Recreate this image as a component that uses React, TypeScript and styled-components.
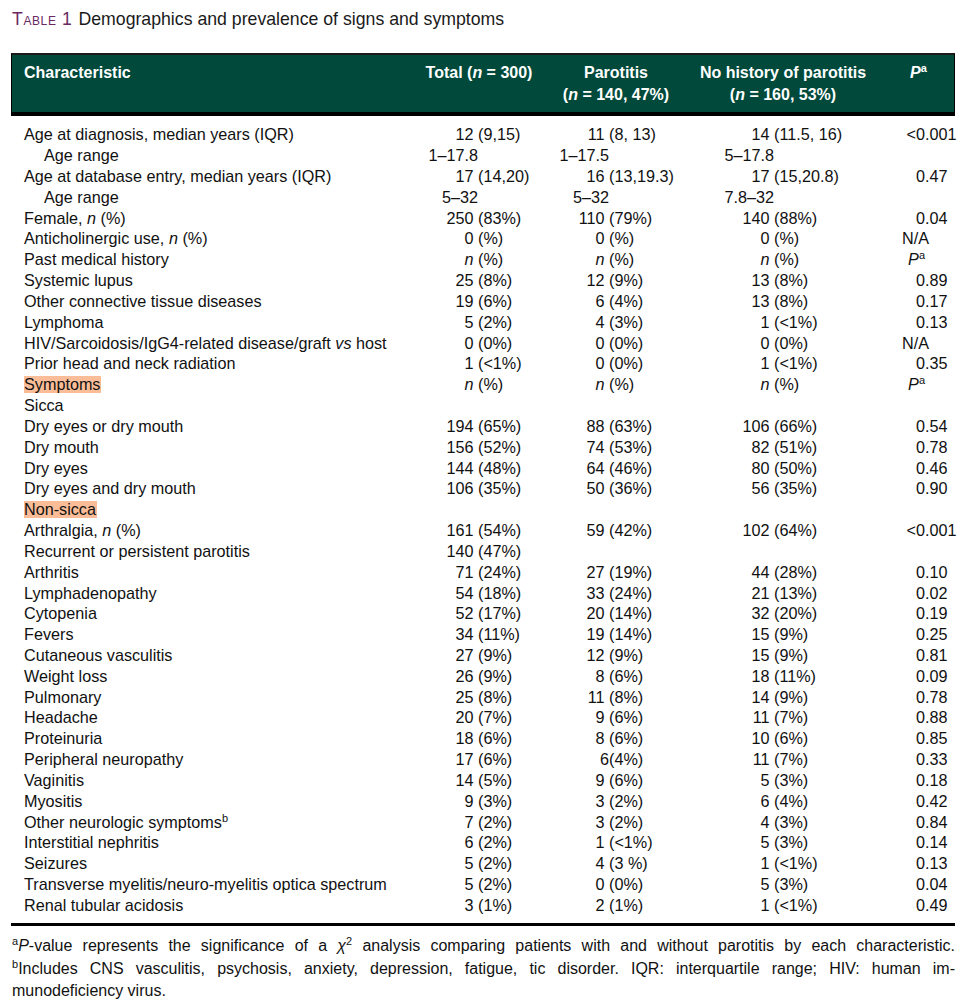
import React from "react";
import styled, { createGlobalStyle } from "styled-components";

const GlobalStyle = createGlobalStyle`
  html, body { margin: 0; padding: 0; background: #fff; }
  body { font-family: "Liberation Sans", Arial, Helvetica, sans-serif; color: #111; }
`;

const Page = styled.div`
  width: 966px;
  padding: 8px 11px 0 11px;
  box-sizing: border-box;
`;

const Title = styled.h1`
  margin: 0 0 23px 1px;
  font-size: 17.7px;
  font-weight: normal;
  line-height: 22px;
  color: #1a1a1a;
  white-space: nowrap;
`;

const TitleLabel = styled.span`
  color: #6b2a5f;
  font-variant: small-caps;
  letter-spacing: 0.6px;
  margin-right: 6px;
`;

const Head = styled.div`
  display: grid;
  grid-template-columns: 1fr 140px 134px 200px 71px;
  align-items: start;
  background: #00493b;
  color: #fff;
  font-weight: bold;
  font-size: 16px;
  line-height: 22px;
  border-top: 2px solid #1b1b1b;
  border-bottom: 4px solid #000;
  border-left: 1px solid #000;
  border-right: 1px solid #000;
  padding: 7px 0 6px;
`;

const HeadCell = styled.div<{ $align?: "left" | "center" }>`
  text-align: ${(p) => p.$align ?? "center"};
  padding-left: ${(p) => (p.$align === "left" ? "12px" : "0")};
  white-space: nowrap;
`;

const Body = styled.div`
  padding: 8.3px 0 7.3px;
  border-bottom: 3px solid #000;
`;

const Row = styled.div`
  display: grid;
  grid-template-columns: 389px 145px 145px 190px 75px;
  font-size: 16.2px;
  line-height: 20.84px;
  height: 20.84px;
  white-space: nowrap;
`;

const Label = styled.div<{ $indent?: boolean }>`
  padding-left: ${(p) => (p.$indent ? "33px" : "13px")};
`;

const Highlight = styled.span`
  display: inline-block;
  background: #fbbd98;
  line-height: 17px;
  padding: 0 1px 0 0;
`;

const Num = styled.div<{ $before: number }>`
  display: grid;
  grid-template-columns: ${(p) => p.$before}px auto;
  white-space: pre;
`;

const Pre = styled.span`
  text-align: right;
  white-space: pre;
`;

const Post = styled.span`
  white-space: pre;
`;

const I = styled.i`
  font-style: italic;
`;

const Sup = styled.sup`
  font-size: 11px;
  line-height: 0;
  vertical-align: 6px;
`;

const Notes = styled.div`
  margin: 9px 0 0 1px;
  font-family: "Liberation Sans Narrow", "Arial Narrow", "Liberation Sans", sans-serif;
  font-stretch: condensed;
  font-size: 16px;
  line-height: 22.5px;
  color: #111;
`;

const NoteLine = styled.div<{ $justify?: boolean }>`
  text-align: justify;
  text-align-last: ${(p) => (p.$justify ? "justify" : "left")};
  white-space: nowrap;
`;

const NoteSup = styled.sup`
  font-size: 11px;
  line-height: 0;
  vertical-align: 6px;
`;

type Vals = [string, string, string, string];
type RowData = { label: React.ReactNode; indent?: boolean; hl?: boolean; v?: Vals; range?: boolean };

const ANCH = [78, 64, 84, 45];

function Count({ v, col, range }: { v: string; col: number; range?: boolean }) {
  if (!v) return <div />;
  if (range) {
    return (
      <Num $before={ANCH[col]}>
        <Pre>{v}</Pre>
        <Post />
      </Num>
    );
  }
  if (v === "n (%)") {
    return (
      <Num $before={ANCH[col]}>
        <Pre>
          <I>n</I>{" "}
        </Pre>
        <Post>(%)</Post>
      </Num>
    );
  }
  const idx = v.indexOf("(");
  return (
    <Num $before={ANCH[col]}>
      <Pre>{v.slice(0, idx)}</Pre>
      <Post>{v.slice(idx)}</Post>
    </Num>
  );
}

function PVal({ v }: { v: string }) {
  if (!v) return <div />;
  if (v === "P") {
    return (
      <Num $before={ANCH[3]}>
        <Pre>
          <I>P</I>
          <Sup>a</Sup>
        </Pre>
        <Post />
      </Num>
    );
  }
  if (v === "N/A") {
    return (
      <Num $before={ANCH[3] + 4}>
        <Pre>N/A</Pre>
        <Post />
      </Num>
    );
  }
  const idx = v.indexOf(".");
  return (
    <Num $before={ANCH[3]}>
      <Pre>{v.slice(0, idx)}</Pre>
      <Post>{v.slice(idx)}</Post>
    </Num>
  );
}

const rows: RowData[] = [
  { label: "Age at diagnosis, median years (IQR)", v: ["12 (9,15)", "11 (8, 13)", "14 (11.5, 16)", "<0.001"] },
  { label: "Age range", indent: true, range: true, v: ["1–17.8", "1–17.5", "5–17.8", ""] },
  { label: "Age at database entry, median years (IQR)", v: ["17 (14,20)", "16 (13,19.3)", "17 (15,20.8)", "0.47"] },
  { label: "Age range", indent: true, range: true, v: ["5–32", "5–32", "7.8–32", ""] },
  { label: <>Female, <I>n</I> (%)</>, v: ["250 (83%)", "110 (79%)", "140 (88%)", "0.04"] },
  { label: <>Anticholinergic use, <I>n</I> (%)</>, v: ["0 (%)", "0 (%)", "0 (%)", "N/A"] },
  { label: "Past medical history", v: ["n (%)", "n (%)", "n (%)", "P"] },
  { label: "Systemic lupus", v: ["25 (8%)", "12 (9%)", "13 (8%)", "0.89"] },
  { label: "Other connective tissue diseases", v: ["19 (6%)", "6 (4%)", "13 (8%)", "0.17"] },
  { label: "Lymphoma", v: ["5 (2%)", "4 (3%)", "1 (<1%)", "0.13"] },
  { label: <>HIV/Sarcoidosis/IgG4-related disease/graft <I>vs</I> host</>, v: ["0 (0%)", "0 (0%)", "0 (0%)", "N/A"] },
  { label: "Prior head and neck radiation", v: ["1 (<1%)", "0 (0%)", "1 (<1%)", "0.35"] },
  { label: "Symptoms", hl: true, v: ["n (%)", "n (%)", "n (%)", "P"] },
  { label: "Sicca" },
  { label: "Dry eyes or dry mouth", v: ["194 (65%)", "88 (63%)", "106 (66%)", "0.54"] },
  { label: "Dry mouth", v: ["156 (52%)", "74 (53%)", "82 (51%)", "0.78"] },
  { label: "Dry eyes", v: ["144 (48%)", "64 (46%)", "80 (50%)", "0.46"] },
  { label: "Dry eyes and dry mouth", v: ["106 (35%)", "50 (36%)", "56 (35%)", "0.90"] },
  { label: "Non-sicca", hl: true },
  { label: <>Arthralgia, <I>n</I> (%)</>, v: ["161 (54%)", "59 (42%)", "102 (64%)", "<0.001"] },
  { label: "Recurrent or persistent parotitis", v: ["140 (47%)", "", "", ""] },
  { label: "Arthritis", v: ["71 (24%)", "27 (19%)", "44 (28%)", "0.10"] },
  { label: "Lymphadenopathy", v: ["54 (18%)", "33 (24%)", "21 (13%)", "0.02"] },
  { label: "Cytopenia", v: ["52 (17%)", "20 (14%)", "32 (20%)", "0.19"] },
  { label: "Fevers", v: ["34 (11%)", "19 (14%)", "15 (9%)", "0.25"] },
  { label: "Cutaneous vasculitis", v: ["27 (9%)", "12 (9%)", "15 (9%)", "0.81"] },
  { label: "Weight loss", v: ["26 (9%)", "8 (6%)", "18 (11%)", "0.09"] },
  { label: "Pulmonary", v: ["25 (8%)", "11 (8%)", "14 (9%)", "0.78"] },
  { label: "Headache", v: ["20 (7%)", "9 (6%)", "11 (7%)", "0.88"] },
  { label: "Proteinuria", v: ["18 (6%)", "8 (6%)", "10 (6%)", "0.85"] },
  { label: "Peripheral neuropathy", v: ["17 (6%)", "6(4%)", "11 (7%)", "0.33"] },
  { label: "Vaginitis", v: ["14 (5%)", "9 (6%)", "5 (3%)", "0.18"] },
  { label: "Myositis", v: ["9 (3%)", "3 (2%)", "6 (4%)", "0.42"] },
  { label: <>Other neurologic symptoms<Sup>b</Sup></>, v: ["7 (2%)", "3 (2%)", "4 (3%)", "0.84"] },
  { label: "Interstitial nephritis", v: ["6 (2%)", "1 (<1%)", "5 (3%)", "0.14"] },
  { label: "Seizures", v: ["5 (2%)", "4 (3 %)", "1 (<1%)", "0.13"] },
  { label: "Transverse myelitis/neuro-myelitis optica spectrum", v: ["5 (2%)", "0 (0%)", "5 (3%)", "0.04"] },
  { label: "Renal tubular acidosis", v: ["3 (1%)", "2 (1%)", "1 (<1%)", "0.49"] },
];

export default function App() {
  return (
    <>
      <GlobalStyle />
      <Page>
        <Title>
          <TitleLabel>Table 1</TitleLabel>Demographics and prevalence of signs and symptoms
        </Title>
        <Head>
          <HeadCell $align="left">Characteristic</HeadCell>
          <HeadCell>
            Total (<I>n</I> = 300)
          </HeadCell>
          <HeadCell>
            Parotitis
            <br />(<I>n</I> = 140, 47%)
          </HeadCell>
          <HeadCell>
            No history of parotitis
            <br />(<I>n</I> = 160, 53%)
          </HeadCell>
          <HeadCell>
            <I>P</I>
            <Sup>a</Sup>
          </HeadCell>
        </Head>
        <Body>
          {rows.map((r, i) => (
            <Row key={i}>
              <Label $indent={r.indent}>{r.hl ? <Highlight>{r.label}</Highlight> : r.label}</Label>
              {r.v ? (
                <>
                  <Count v={r.v[0]} col={0} range={r.range} />
                  <Count v={r.v[1]} col={1} range={r.range} />
                  <Count v={r.v[2]} col={2} range={r.range} />
                  <PVal v={r.v[3]} />
                </>
              ) : null}
            </Row>
          ))}
        </Body>
        <Notes>
          <NoteLine $justify>
            <NoteSup>a</NoteSup>
            <I>P</I>-value represents the significance of a <I>χ</I>
            <NoteSup>2</NoteSup> analysis comparing patients with and without parotitis by each characteristic.
          </NoteLine>
          <NoteLine $justify>
            <NoteSup>b</NoteSup>Includes CNS vasculitis, psychosis, anxiety, depression, fatigue, tic disorder. IQR:
            interquartile range; HIV: human im-
          </NoteLine>
          <NoteLine>munodeficiency virus.</NoteLine>
        </Notes>
      </Page>
    </>
  );
}
